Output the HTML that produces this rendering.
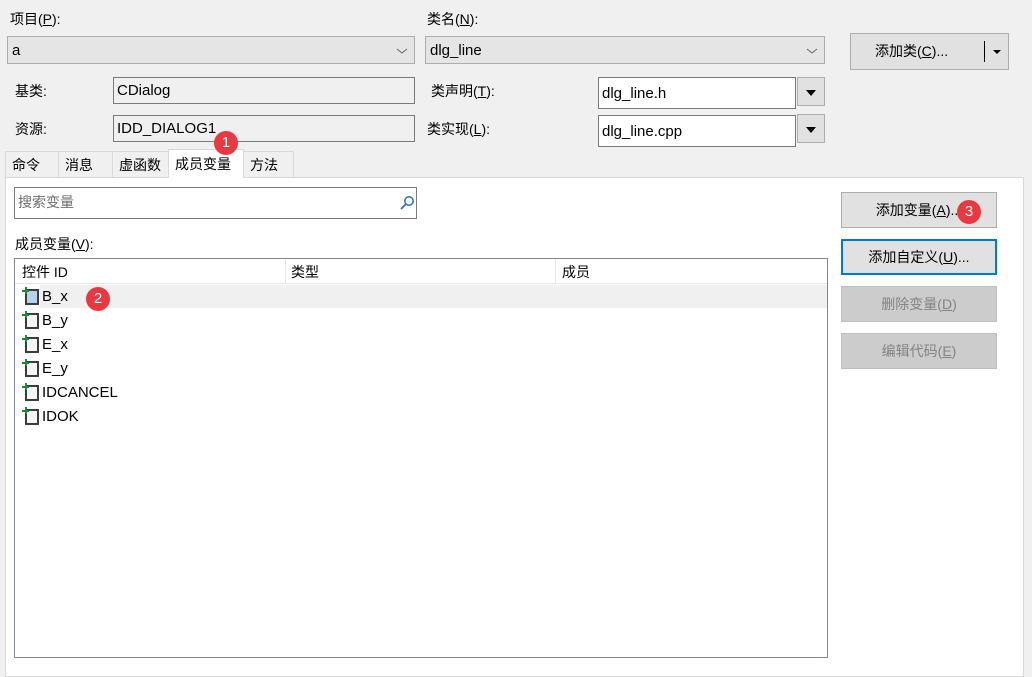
<!DOCTYPE html>
<html><head><meta charset="utf-8"><style>
*{box-sizing:border-box;margin:0;padding:0}
body{width:1032px;height:671px;background:#f0f0f0;font-family:"Liberation Sans","Noto Sans CJK SC",sans-serif;font-size:14px;color:#000;position:relative;overflow:hidden}
.a{position:absolute}
.lbl{position:absolute;line-height:16px}
.combo,.fld{display:flex;align-items:center}
.combo{position:absolute;background:#e5e5e5;border:1px solid #adadad;padding-left:4px;font-size:15px}
.combo svg{position:absolute;right:6px;top:10px}
.fld{position:absolute;border:1px solid #7a7a7a;background:#f0f0f0;padding-left:3px;font-size:15px}
.wfld{background:#fff}
.dd{position:absolute;background:#e1e1e1;border:1px solid #adadad}
.dd:after{content:"";position:absolute;left:8px;top:12px;border-left:5px solid transparent;border-right:5px solid transparent;border-top:6px solid #000}
.tab{position:absolute;top:151px;height:26px;border:1px solid #d9d9d9;border-bottom:none;background:#f0f0f0;line-height:26px;padding-left:6px}
.btn{position:absolute;left:841px;width:156px;height:36px;background:#e1e1e1;border:1px solid #adadad;text-align:center;line-height:34px}
.dis{background:#cccccc;border-color:#bfbfbf;color:#838383}
.badge{position:absolute;width:24px;height:24px;border-radius:50%;background:#e9383f;color:#fff;text-align:center;line-height:24px;font-size:15px}
.row{position:absolute;left:22px;height:24px;line-height:24px;font-size:15px}
.ic{display:inline-block;position:relative;width:20px;height:18px;vertical-align:-4px}
.ic i{position:absolute;left:3px;top:2px;width:14px;height:16px;border:2px solid #3c3c3c;background:#f4f4f4}
.ic b{position:absolute;left:0;top:0;width:7px;height:7px}
.ic b:before{content:"";position:absolute;left:3px;top:0;width:2px;height:7px;background:#1a8a3a}
.ic b:after{content:"";position:absolute;left:0;top:3px;width:7px;height:2px;background:#1a8a3a}
</style></head><body>
<div class="lbl" style="left:10px;top:11px">项目(<u>P</u>):</div>
<div class="lbl" style="left:427px;top:11px">类名(<u>N</u>):</div>
<div class="combo" style="left:7px;top:36px;width:408px;height:28px">a<svg width="12" height="8"><path d="M1 2 L6 6 L11 2" fill="none" stroke="#666"/></svg></div>
<div class="combo" style="left:425px;top:36px;width:400px;height:28px">dlg_line<svg width="12" height="8"><path d="M1 2 L6 6 L11 2" fill="none" stroke="#666"/></svg></div>
<div class="a" style="left:850px;top:33px;width:159px;height:37px;background:#e1e1e1;border:1px solid #adadad;line-height:35px;padding-left:24px">添加类(<u>C</u>)...<span class="a" style="left:133px;top:7px;width:1px;height:21px;background:#000"></span><span class="a" style="left:142px;top:16px;border-left:4px solid transparent;border-right:4px solid transparent;border-top:4px solid #000"></span></div>
<div class="lbl" style="left:15px;top:83px">基类:</div>
<div class="lbl" style="left:15px;top:121px">资源:</div>
<div class="fld" style="left:113px;top:77px;width:302px;height:27px">CDialog</div>
<div class="fld" style="left:113px;top:115px;width:302px;height:27px">IDD_DIALOG1</div>
<div class="lbl" style="left:431px;top:83px">类声明(<u>T</u>):</div>
<div class="lbl" style="left:427px;top:121px">类实现(<u>L</u>):</div>
<div class="fld wfld" style="left:598px;top:77px;width:198px;height:32px">dlg_line.h</div>
<div class="fld wfld" style="left:598px;top:115px;width:198px;height:32px">dlg_line.cpp</div>
<div class="dd" style="left:797px;top:77px;width:28px;height:29px"></div>
<div class="dd" style="left:797px;top:114px;width:28px;height:29px"></div>
<div class="a" style="left:5px;top:177px;width:1019px;height:500px;background:#fff;border:1px solid #d9d9d9"></div>
<div class="tab" style="left:5px;width:54px">命令</div>
<div class="tab" style="left:58px;width:55px">消息</div>
<div class="tab" style="left:112px;width:57px">虚函数</div>
<div class="tab" style="left:168px;top:149px;height:29px;width:76px;background:#fff;line-height:28px">成员变量</div>
<div class="tab" style="left:243px;width:51px">方法</div>
<div class="a" style="left:14px;top:187px;width:403px;height:32px;border:1px solid #7a7a7a;background:#fff;color:#6d6d6d;padding-left:3px;line-height:28px">搜索变量
<svg class="a" style="left:384px;top:7px" width="16" height="16" viewBox="0 0 16 16"><circle cx="10" cy="6" r="4.2" fill="none" stroke="#2a6fb8" stroke-width="1.5"/><path d="M7 9 L2 14" stroke="#2a6fb8" stroke-width="1.8"/></svg></div>
<div class="lbl" style="left:15px;top:236px">成员变量(<u>V</u>):</div>
<div class="a" style="left:14px;top:258px;width:814px;height:400px;border:1px solid #828790;background:#fff"></div>
<div class="a" style="left:15px;top:259px;width:812px;height:25px;border-bottom:1px solid #e5e5e5"></div>
<div class="a" style="left:285px;top:259px;width:1px;height:25px;background:#e5e5e5"></div>
<div class="a" style="left:555px;top:259px;width:1px;height:25px;background:#e5e5e5"></div>
<div class="lbl" style="left:22px;top:264px">控件 ID</div>
<div class="lbl" style="left:291px;top:264px">类型</div>
<div class="lbl" style="left:562px;top:264px">成员</div>
<div class="a" style="left:40px;top:285px;width:787px;height:23px;background:#f0f0f0"></div>
<div class="row" style="top:285px"><span class="ic"><i style="background:#b7d3ea"></i><b></b></span>B_x</div>
<div class="row" style="top:309px"><span class="ic"><i></i><b></b></span>B_y</div>
<div class="row" style="top:333px"><span class="ic"><i></i><b></b></span>E_x</div>
<div class="row" style="top:357px"><span class="ic"><i></i><b></b></span>E_y</div>
<div class="row" style="top:381px"><span class="ic"><i></i><b></b></span>IDCANCEL</div>
<div class="row" style="top:405px"><span class="ic"><i></i><b></b></span>IDOK</div>
<div class="btn" style="top:192px">添加变量(<u>A</u>)...</div>
<div class="btn" style="top:239px;border:2px solid #0078d7;line-height:32px">添加自定义(<u>U</u>)...</div>
<div class="btn dis" style="top:286px">删除变量(<u>D</u>)</div>
<div class="btn dis" style="top:333px">编辑代码(<u>E</u>)</div>
<div class="badge" style="left:214px;top:131px">1</div>
<div class="badge" style="left:86px;top:287px">2</div>
<div class="badge" style="left:957px;top:200px">3</div>
</body></html>
